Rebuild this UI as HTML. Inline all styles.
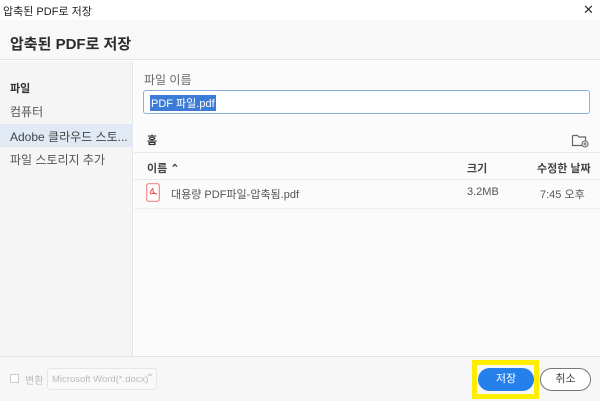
<!DOCTYPE html>
<html><head><meta charset="utf-8"><style>
*{margin:0;padding:0;box-sizing:border-box}
body{width:600px;height:401px;overflow:hidden;background:#fff;font-family:"Liberation Sans","Noto Sans CJK KR",sans-serif;position:relative;color:#333}
.a{position:absolute;white-space:nowrap}
</style></head><body>
<div class="a" style="left:0;top:0;width:600px;height:20px;background:#fff"></div>
<div class="a" style="left:3px;top:3px;font-size:11px;color:#222">압축된 PDF로 저장</div>
<div class="a" style="left:583px;top:2px;font-size:13px;color:#333">✕</div>
<div class="a" style="left:0;top:20px;width:600px;height:40px;background:#f8f8f8;border-bottom:1px solid #e6e6e6"></div>
<div class="a" style="left:10px;top:33px;font-size:15px;font-weight:bold;color:#2c2c2c">압축된 PDF로 저장</div>
<div class="a" style="left:0;top:61px;width:133px;height:295px;background:#f5f5f5;border-right:1px solid #e4e4e4"></div>
<div class="a" style="left:10px;top:80px;font-size:11px;font-weight:bold;color:#333">파일</div>
<div class="a" style="left:10px;top:103px;font-size:12px;color:#555">컴퓨터</div>
<div class="a" style="left:0;top:124px;width:133px;height:23px;background:#e1e9f5"></div>
<div class="a" style="left:10px;top:128px;font-size:12px;color:#444">Adobe 클라우드 스토...</div>
<div class="a" style="left:10px;top:151px;font-size:12px;color:#555">파일 스토리지 추가</div>
<div class="a" style="left:134px;top:61px;width:466px;height:295px;background:#fbfbfb"></div>
<div class="a" style="left:144px;top:71px;font-size:12px;color:#666">파일 이름</div>
<div class="a" style="left:143px;top:90px;width:447px;height:24px;border:1px solid #8ab0e0;border-radius:3px;background:#fff"></div>
<div class="a" style="left:150px;top:95px;font-size:11px;color:#fff;background:#3c7bd6;padding:0 1px">PDF 파일.pdf</div>
<div class="a" style="left:147px;top:132px;font-size:11px;font-weight:bold;color:#333">홈</div>
<svg class="a" style="left:571px;top:132px" width="18" height="16" viewBox="0 0 18 16"><path d="M1.5 3.5h5l1.5 1.5h6.5v4M12 13.5H1.5v-10" fill="none" stroke="#666" stroke-width="1.2"/><circle cx="14" cy="12" r="3" fill="#fff" stroke="#666" stroke-width="1.1"/><path d="M14 10.3v3.4M12.3 12h3.4" stroke="#666"/></svg>
<div class="a" style="left:134px;top:152px;width:466px;height:1px;background:#e8e8e8"></div>
<div class="a" style="left:147px;top:160px;font-size:11px;font-weight:bold;color:#444">이름 ⌃</div>
<div class="a" style="left:467px;top:160px;font-size:11px;font-weight:bold;color:#444">크기</div>
<div class="a" style="left:537px;top:160px;font-size:11px;font-weight:bold;color:#444">수정한 날짜</div>
<div class="a" style="left:134px;top:179px;width:466px;height:1px;background:#e8e8e8"></div>
<svg class="a" style="left:146px;top:183px" width="14" height="19" viewBox="0 0 14 19"><rect x="0.7" y="0.7" width="12.6" height="17.6" rx="2" fill="#fff" stroke="#e88" stroke-width="1.2"/><path d="M4 10c2-4 3-6 3-3s2 4 4 4M4 11c3-1 5-1 6 0" fill="none" stroke="#e33" stroke-width="0.9"/></svg>
<div class="a" style="left:171px;top:186px;font-size:11px;color:#555">대용량 PDF파일-압축됨.pdf</div>
<div class="a" style="left:467px;top:186px;font-size:11px;color:#555">3.2MB</div>
<div class="a" style="left:540px;top:186px;font-size:11px;color:#555">7:45 오후</div>
<div class="a" style="left:134px;top:208px;width:466px;height:1px;background:#eee"></div>
<div class="a" style="left:0;top:356px;width:600px;height:45px;background:#f7f7f7;border-top:1px solid #e2e2e2"></div>
<div class="a" style="left:10px;top:374px;width:9px;height:9px;border:1px solid #ccc;background:#fff"></div>
<div class="a" style="left:25px;top:372px;font-size:10px;color:#bbb">변환</div>
<div class="a" style="left:47px;top:368px;width:110px;height:22px;border:1px solid #e6e6e6;border-radius:3px;background:#f9f9f9"></div>
<div class="a" style="left:52px;top:374px;font-size:9.5px;color:#bbb">Microsoft Word(*.docx)</div>
<div class="a" style="left:146px;top:373px;font-size:10px;color:#bbb">⌃</div>
<div class="a" style="left:472px;top:360px;width:67px;height:39px;border:5px solid #ffed00"></div>
<div class="a" style="left:478px;top:368px;width:56px;height:23px;border-radius:12px;background:#2680eb;color:#fff;font-size:11px;text-align:center;line-height:23px">저장</div>
<div class="a" style="left:540px;top:368px;width:51px;height:23px;border-radius:12px;border:1.5px solid #777;background:#fff;color:#444;font-size:11px;text-align:center;line-height:20px">취소</div>
</body></html>
